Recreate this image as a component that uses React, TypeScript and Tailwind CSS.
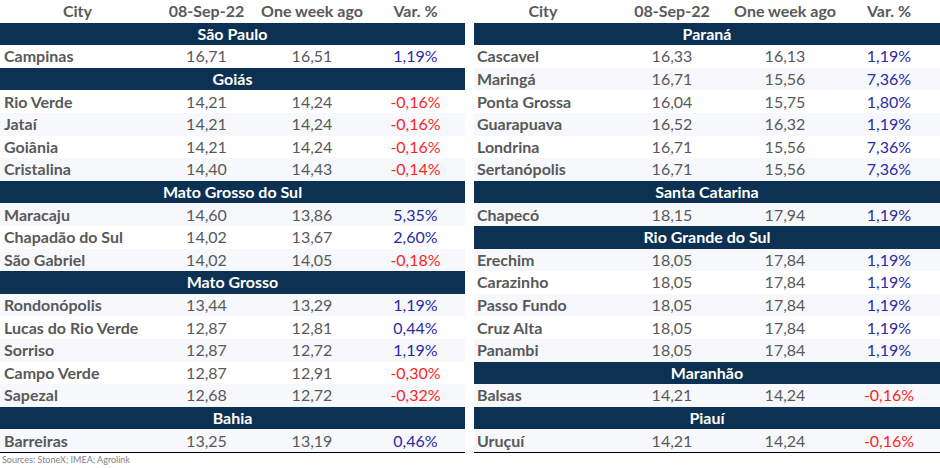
import React from "react";

type Row = { city: string; today: string; week: string; varPct: string };
type Section = { state: string; rows: Row[] };

const left: Section[] = [
  { state: "São Paulo", rows: [{ city: "Campinas", today: "16,71", week: "16,51", varPct: "1,19%" }] },
  {
    state: "Goiás",
    rows: [
      { city: "Rio Verde", today: "14,21", week: "14,24", varPct: "-0,16%" },
      { city: "Jataí", today: "14,21", week: "14,24", varPct: "-0,16%" },
      { city: "Goiânia", today: "14,21", week: "14,24", varPct: "-0,16%" },
      { city: "Cristalina", today: "14,40", week: "14,43", varPct: "-0,14%" },
    ],
  },
  {
    state: "Mato Grosso do Sul",
    rows: [
      { city: "Maracaju", today: "14,60", week: "13,86", varPct: "5,35%" },
      { city: "Chapadão do Sul", today: "14,02", week: "13,67", varPct: "2,60%" },
      { city: "São Gabriel", today: "14,02", week: "14,05", varPct: "-0,18%" },
    ],
  },
  {
    state: "Mato Grosso",
    rows: [
      { city: "Rondonópolis", today: "13,44", week: "13,29", varPct: "1,19%" },
      { city: "Lucas do Rio Verde", today: "12,87", week: "12,81", varPct: "0,44%" },
      { city: "Sorriso", today: "12,87", week: "12,72", varPct: "1,19%" },
      { city: "Campo Verde", today: "12,87", week: "12,91", varPct: "-0,30%" },
      { city: "Sapezal", today: "12,68", week: "12,72", varPct: "-0,32%" },
    ],
  },
  { state: "Bahia", rows: [{ city: "Barreiras", today: "13,25", week: "13,19", varPct: "0,46%" }] },
];

const right: Section[] = [
  {
    state: "Paraná",
    rows: [
      { city: "Cascavel", today: "16,33", week: "16,13", varPct: "1,19%" },
      { city: "Maringá", today: "16,71", week: "15,56", varPct: "7,36%" },
      { city: "Ponta Grossa", today: "16,04", week: "15,75", varPct: "1,80%" },
      { city: "Guarapuava", today: "16,52", week: "16,32", varPct: "1,19%" },
      { city: "Londrina", today: "16,71", week: "15,56", varPct: "7,36%" },
      { city: "Sertanópolis", today: "16,71", week: "15,56", varPct: "7,36%" },
    ],
  },
  { state: "Santa Catarina", rows: [{ city: "Chapecó", today: "18,15", week: "17,94", varPct: "1,19%" }] },
  {
    state: "Rio Grande do Sul",
    rows: [
      { city: "Erechim", today: "18,05", week: "17,84", varPct: "1,19%" },
      { city: "Carazinho", today: "18,05", week: "17,84", varPct: "1,19%" },
      { city: "Passo Fundo", today: "18,05", week: "17,84", varPct: "1,19%" },
      { city: "Cruz Alta", today: "18,05", week: "17,84", varPct: "1,19%" },
      { city: "Panambi", today: "18,05", week: "17,84", varPct: "1,19%" },
    ],
  },
  { state: "Maranhão", rows: [{ city: "Balsas", today: "14,21", week: "14,24", varPct: "-0,16%" }] },
  { state: "Piauí", rows: [{ city: "Uruçuí", today: "14,21", week: "14,24", varPct: "-0,16%" }] },
];

function PriceTable({ sections, cols, cityPad }: { sections: Section[]; cols: string; cityPad: string }) {
  // stripes follow the row index across the whole table, section bands included
  let idx = 1;
  return (
    <div className="flex flex-col border-b border-black">
      <div className={`grid ${cols} h-[22.6px] items-center font-bold text-[#595959]`}>
        <div className="text-center">City</div>
        <div className="text-center">08-Sep-22</div>
        <div className="text-center whitespace-nowrap">One week ago</div>
        <div className="text-center">Var. %</div>
      </div>
      {sections.map((s) => {
        idx++;
        return (
          <React.Fragment key={s.state}>
            <div className="h-[22.6px] flex items-center justify-center bg-[#0c3152] text-white font-bold">
              {s.state}
            </div>
            {s.rows.map((r) => {
              idx++;
              const stripe = idx % 2 === 0 ? "bg-[#f6f8fb]" : "bg-white";
              const neg = r.varPct.startsWith("-");
              return (
                <div key={r.city} className={`grid ${cols} h-[22.6px] items-center ${stripe}`}>
                  <div className={`${cityPad} font-bold text-[#595959] whitespace-nowrap`}>{r.city}</div>
                  <div className="text-center text-[#595959]">{r.today}</div>
                  <div className="text-center text-[#595959]">{r.week}</div>
                  <div className={`text-center ${neg ? "text-[#ff1f1f]" : "text-[#2a2aa5]"}`}>{r.varPct}</div>
                </div>
              );
            })}
          </React.Fragment>
        );
      })}
    </div>
  );
}

export default function App() {
  return (
    <div className="w-[940px] h-[468px] bg-white font-['Lato','Liberation_Sans',sans-serif] text-[16px] leading-none">
      <div className="flex gap-[9px]">
        <div className="w-[465px]">
          <PriceTable sections={left} cols="grid-cols-[155px_103px_108px_99px]" cityPad="pl-[4px]" />
        </div>
        <div className="w-[466px]">
          <PriceTable sections={right} cols="grid-cols-[138px_120px_106px_102px]" cityPad="pl-[3px]" />
        </div>
      </div>
      <div className="pl-[2px] pt-[2px] text-[9px] text-[#7f7f7f]">Sources: StoneX; IMEA; Agrolink</div>
    </div>
  );
}
